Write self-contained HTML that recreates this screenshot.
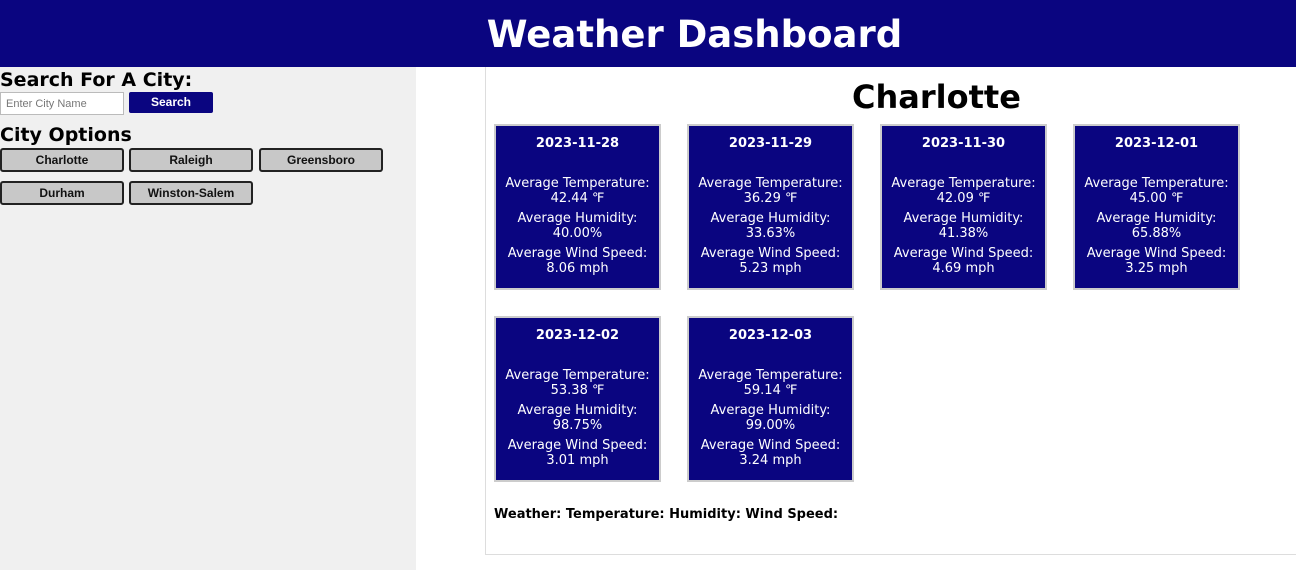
<!DOCTYPE html>
<html><head><style>
*{box-sizing:border-box;margin:0;padding:0}
body{width:1296px;height:570px;overflow:hidden;background:#fff;font-family:"DejaVu Sans",sans-serif;position:relative}
header{position:absolute;left:0;top:0;width:1296px;height:67px;background:#0a0580;color:#fff;text-align:center;font-weight:bold;font-size:37px;line-height:70px;padding-left:93px}
.side{position:absolute;left:0;top:67px;width:416px;height:503px;background:#f0f0f0}
h2{position:absolute;left:0;font-size:19px;font-weight:bold;color:#000;line-height:24px}
.inp{position:absolute;left:0;top:92px;width:124px;height:23px;background:#fff;border:1px solid #bbb;font:11px "Liberation Sans",sans-serif;color:#777;padding:5px 5px}
.sb{position:absolute;left:129px;top:92px;width:84px;height:21px;background:#0a0580;color:#fff;border-radius:2px;font:bold 12px "Liberation Sans",sans-serif;text-align:center;line-height:21px}
.cb{position:absolute;width:124px;height:24px;background:#c8c8c8;border:2px solid #222;border-radius:3px;font:bold 12px "Liberation Sans",sans-serif;text-align:center;line-height:20px;color:#111}
.main{position:absolute;left:485px;top:67px;width:820px;height:488px;border-left:1px solid #ddd;border-bottom:1px solid #ddd}
.city{position:absolute;left:852px;top:77px;font-size:32px;font-weight:bold;line-height:40px}
.card{position:absolute;width:167px;height:166px;background:#0a0580;border:2px solid #ccc;color:#fff;text-align:center;font-size:13px;line-height:15px}
.card b{display:block;font-size:13px;margin-top:10px;margin-bottom:25px;line-height:15px}
.card p{margin-bottom:5px}
.foot{position:absolute;left:494px;top:507px;font-size:13px;font-weight:bold}
</style></head><body>
<header>Weather Dashboard</header>
<div class="side"></div>
<h2 style="top:68px">Search For A City:</h2>
<div class="inp">Enter City Name</div>
<div class="sb">Search</div>
<h2 style="top:123px">City Options</h2>
<div class="cb" style="left:0;top:148px">Charlotte</div>
<div class="cb" style="left:129px;top:148px">Raleigh</div>
<div class="cb" style="left:259px;top:148px">Greensboro</div>
<div class="cb" style="left:0;top:181px">Durham</div>
<div class="cb" style="left:129px;top:181px">Winston-Salem</div>
<div class="main"></div>
<div class="city">Charlotte</div>
<div class="card" style="left:494px;top:124px"><b>2023-11-28</b><p>Average Temperature:<br>42.44 ℉</p><p>Average Humidity:<br>40.00%</p><p>Average Wind Speed:<br>8.06 mph</p></div>
<div class="card" style="left:687px;top:124px"><b>2023-11-29</b><p>Average Temperature:<br>36.29 ℉</p><p>Average Humidity:<br>33.63%</p><p>Average Wind Speed:<br>5.23 mph</p></div>
<div class="card" style="left:880px;top:124px"><b>2023-11-30</b><p>Average Temperature:<br>42.09 ℉</p><p>Average Humidity:<br>41.38%</p><p>Average Wind Speed:<br>4.69 mph</p></div>
<div class="card" style="left:1073px;top:124px"><b>2023-12-01</b><p>Average Temperature:<br>45.00 ℉</p><p>Average Humidity:<br>65.88%</p><p>Average Wind Speed:<br>3.25 mph</p></div>
<div class="card" style="left:494px;top:316px"><b>2023-12-02</b><p>Average Temperature:<br>53.38 ℉</p><p>Average Humidity:<br>98.75%</p><p>Average Wind Speed:<br>3.01 mph</p></div>
<div class="card" style="left:687px;top:316px"><b>2023-12-03</b><p>Average Temperature:<br>59.14 ℉</p><p>Average Humidity:<br>99.00%</p><p>Average Wind Speed:<br>3.24 mph</p></div>
<div class="foot">Weather: Temperature: Humidity: Wind Speed:</div>
</body></html>
